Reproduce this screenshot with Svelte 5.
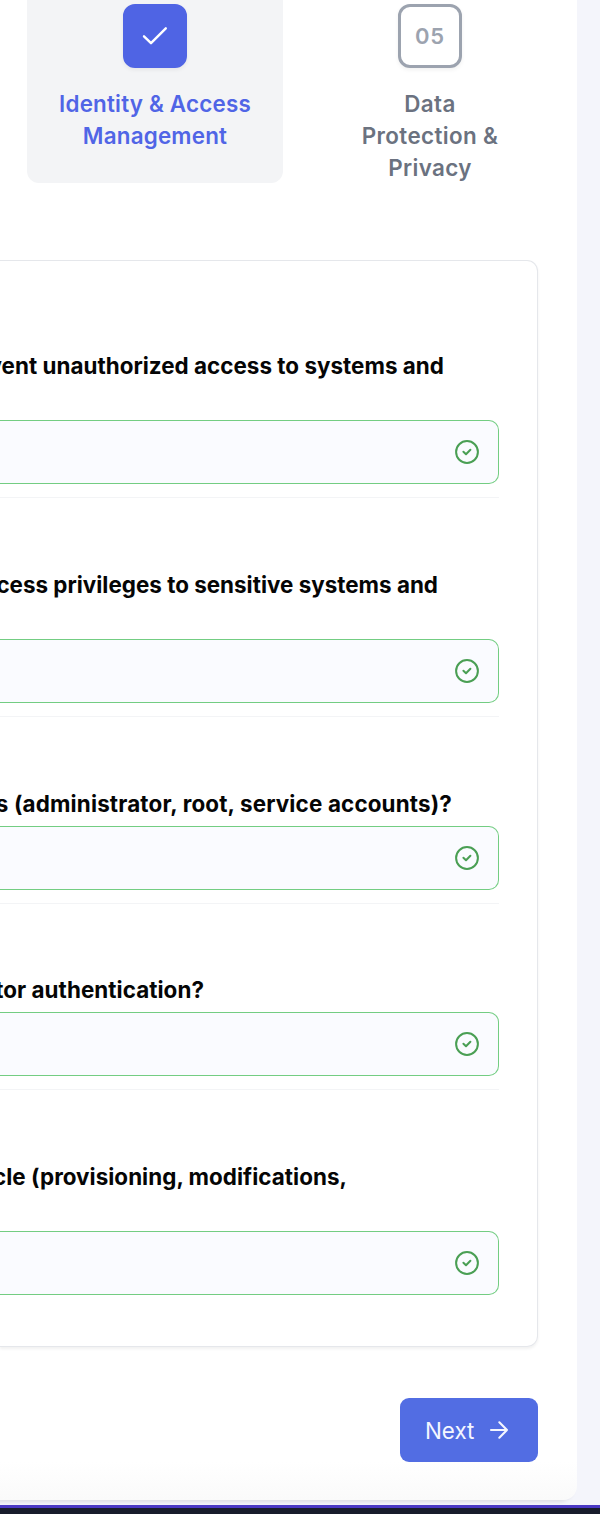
<script>
  const questions = [
    { text: 'vent unauthorized access to systems and', end: 444, lines: 2, spacing: 0.03 },
    { text: 'cess privileges to sensitive systems and', end: 438, lines: 2, spacing: 0.01 },
    { text: 's (administrator, root, service accounts)?', end: 452, lines: 1, spacing: 0.16 },
    { text: 'tor authentication?', end: 204, lines: 1, spacing: 0.06 },
    { text: 'cle (provisioning, modifications,', end: 347, lines: 2, spacing: 0.04 }
  ];
</script>

<div class="page">
  <main class="panel">
    <nav class="steps">
      <div class="step active">
        <div class="badge">
          <svg width="32" height="32" viewBox="0 0 32 32" fill="none" stroke="currentColor" stroke-width="2.4" stroke-linecap="round" stroke-linejoin="round"><path d="M5 16.3l7 6.9L26.8 8.3" /></svg>
        </div>
        <span class="name">Identity &amp; Access<br />Management</span>
      </div>
      <div class="step">
        <div class="badge">05</div>
        <span class="name">Data<br />Protection &amp;<br />Privacy</span>
      </div>
    </nav>

    <section class="card">
      {#each questions as q}
        <div class="question">
          <div class="label" class:double={q.lines === 2} style="width:{q.end}px;letter-spacing:{q.spacing}px"><span>{q.text}</span></div>
          <div class="field">
            <svg width="24" height="24" viewBox="0 0 24 24" fill="none" stroke="currentColor" stroke-width="2" stroke-linecap="round" stroke-linejoin="round"><circle cx="12" cy="12" r="10.9" /><path d="M8.4 11.8l2.6 2.5 4.4-4.6" /></svg>
          </div>
        </div>
      {/each}
    </section>

    <div class="actions">
      <button>Next
        <svg width="20" height="20" viewBox="0 0 20 20" fill="none" stroke="currentColor" stroke-width="2.1" stroke-linecap="round" stroke-linejoin="round"><path d="M2 10h16M10.3 2.3L18 10l-7.7 7.7" /></svg>
      </button>
    </div>
  </main>
  <footer></footer>
</div>

<style>
  .page {
    box-sizing: border-box;
    width: 600px;
    height: 1514px;
    overflow: hidden;
    display: flex;
    flex-direction: column;
    justify-content: space-between;
    background: #f4f5fb;
    font-family: Inter, sans-serif;
  }
  .panel {
    box-sizing: border-box;
    width: 577px;
    height: 1500px;
    background: linear-gradient(#fff 1462px, #fafafa 1500px);
    border-bottom-right-radius: 14px;
    box-shadow: -4px 2px 4px rgba(0, 0, 0, 0.1);
  }
  .steps {
    display: flex;
    gap: 19px;
    padding-left: 27px;
    height: 260px;
    align-items: flex-start;
  }
  .step {
    box-sizing: border-box;
    width: 256px;
    height: 183px;
    padding-top: 4px;
    display: flex;
    flex-direction: column;
    align-items: center;
    gap: 20px;
    color: #6b7280;
    border-radius: 0 0 12px 12px;
  }
  .active {
    background: #f3f4f6;
    color: #5065e6;
  }
  .badge {
    box-sizing: border-box;
    flex-shrink: 0;
    width: 64px;
    height: 64px;
    display: grid;
    place-items: center;
    border: 3px solid #9ca3af;
    border-radius: 12px;
    background: #fff;
    color: #9ca3af;
    padding-bottom: 1px;
    font-size: 22px;
    font-weight: 600;
    letter-spacing: 0.8px;
    box-shadow: 0 2px 4px rgba(0, 0, 0, 0.06);
  }
  .active .badge {
    padding: 0;
    background: #4f64e4;
    border-color: #4f64e4;
    color: #fff;
  }
  .name {
    font-size: 22.4px;
    font-weight: 600;
    line-height: 32px;
    text-align: center;
    letter-spacing: 0.38px;
  }
  .active .name {
    letter-spacing: 0.2px;
  }
  .card {
    box-sizing: border-box;
    width: 538px;
    height: 1087px;
    padding: 89.2px 38px 0 0;
    border: 1px solid #e5e7eb;
    border-left: 0;
    border-radius: 0 11px 11px 0;
    box-shadow: 0 2px 3px rgba(0, 0, 0, 0.06);
  }
  .question {
    border-bottom: 1px solid #f3f4f6;
    padding-bottom: 13px;
    margin-bottom: 70.75px;
  }
  .question:last-child {
    border: 0;
    margin: 0;
  }
  .label {
    display: flex;
    justify-content: flex-end;
    height: 32px;
    padding-bottom: 6px;
    overflow: hidden;
    white-space: nowrap;
    font-size: 22.4px;
    font-weight: 700;
    line-height: 32px;
    color: #050505;
  }
  .double {
    height: 64px;
  }
  .field {
    box-sizing: border-box;
    height: 64px;
    padding-right: 19.5px;
    display: flex;
    justify-content: flex-end;
    align-items: center;
    background: #fafbff;
    border: 1px solid #73cd82;
    border-left: 0;
    border-radius: 0 10px 10px 0;
    color: #4a9f54;
  }
  .actions {
    display: flex;
    justify-content: flex-end;
    padding: 51px 39px 0 0;
  }
  button {
    width: 138px;
    height: 64px;
    display: flex;
    align-items: center;
    justify-content: flex-start;
    gap: 15px;
    padding: 0 0 0 25px;
    border: 0;
    border-radius: 9px;
    background: #526de3;
    color: #f4f6ff;
    font: 400 22.4px Inter, sans-serif;
    letter-spacing: 0;
  }
  footer {
    box-sizing: border-box;
    height: 9px;
    background: #181c2b;
    border-top: 3px solid #4a38c4;
  }
  :global(body) {
    margin: 0;
  }
</style>
